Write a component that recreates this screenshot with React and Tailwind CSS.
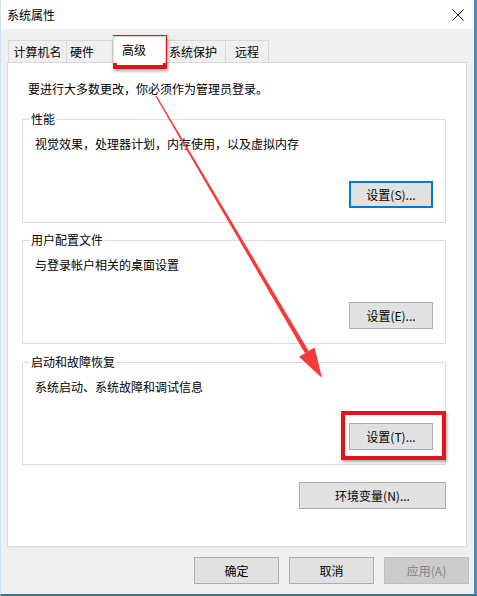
import React from "react";

const font = "font-['Noto_Sans_CJK_SC','Microsoft_YaHei',sans-serif]";

function Btn({ children, focused, disabled, w = "w-[84px]" }) {
  const base = `${w} h-[27px] flex items-center justify-center text-[12px] leading-none`;
  if (focused) return <div className={`${base} border-2 border-[#0078d7] bg-[#e1e1e1] text-black`}>{children}</div>;
  if (disabled) return <div className={`${base} border border-[#bfbfbf] bg-[#cccccc] text-[#838383]`}>{children}</div>;
  return <div className={`${base} border border-[#adadad] bg-[#e1e1e1] text-black`}>{children}</div>;
}

function Group({ label, text, button, focused, h = "h-[104px]", className = "" }) {
  return (
    <div className={`relative ${h} border border-[#dcdcdc] flex flex-col px-[12px] pt-[16px] pb-[14px] ${className}`}>
      <span className="absolute -top-[9px] left-[7px] bg-white px-[1px] text-[12px] leading-[16px]">{label}</span>
      <p className="text-[12px] leading-[16px]">{text}</p>
      <div className="mt-auto self-end">
        <Btn focused={focused}>{button}</Btn>
      </div>
    </div>
  );
}

export default function App() {
  return (
    <div className={`relative w-[477px] h-[596px] bg-[#f0f0f0] border-l border-l-[#cfe0f0] border-r-[3px] border-r-[#4a8ac4] border-b-2 border-b-[#2d7c8c] text-black ${font} overflow-hidden`}>
      {/* Title bar */}
      <div className="h-[29px] bg-white flex items-center justify-between pl-[6px] pr-[6px]">
        <span className="text-[12px]">系统属性</span>
        <svg width="12" height="12" viewBox="0 0 12 12" className="mr-[4px]">
          <path d="M0.5 0.5 L11.5 11.5 M11.5 0.5 L0.5 11.5" stroke="#111" strokeWidth="1" />
        </svg>
      </div>

      {/* Tabs */}
      <div className="mt-[6px] ml-[7px] h-[27px] flex items-end text-[12px]">
        <div className="w-[59px] h-[22px] border border-b-0 border-[#d9d9d9] flex items-center justify-center">计算机名</div>
        <div className="w-[46px] h-[22px] border border-b-0 border-l-0 border-[#d9d9d9] flex items-center pl-[3px]">硬件</div>
        <div className="relative z-10 -mb-px w-[53px] h-[27px] bg-white border border-b-0 border-[#d9d9d9] flex items-center pl-[8px]">高级</div>
        <div className="w-[60px] h-[22px] border border-b-0 border-l-0 border-[#d9d9d9] flex items-center pl-[3px]">系统保护</div>
        <div className="w-[43px] h-[22px] border border-b-0 border-l-0 border-[#d9d9d9] flex items-center justify-center">远程</div>
      </div>

      {/* Tab panel */}
      <div className="ml-[6px] w-[460px] h-[485px] bg-white border border-[#d9d9d9] flex flex-col pl-[14px] pr-[20px] pt-[18px]">
        <p className="ml-[6px] text-[12px] leading-[16px]">要进行大多数更改，你必须作为管理员登录。</p>
        <Group className="mt-[22px]" label="性能" text="视觉效果，处理器计划，内存使用，以及虚拟内存" button="设置(S)..." focused />
        <Group className="mt-[17px]" label="用户配置文件" text="与登录帐户相关的桌面设置" button="设置(E)..." />
        <Group className="mt-[18px]" h="h-[103px]" label="启动和故障恢复" text="系统启动、系统故障和调试信息" button="设置(T)..." />
        <div className="mt-[17px] self-end">
          <Btn w="w-[147px]">环境变量(N)...</Btn>
        </div>
      </div>

      {/* Dialog buttons */}
      <div className="mt-[10px] flex justify-end gap-[10px] pr-[5px]">
        <Btn w="w-[85px]">确定</Btn>
        <Btn w="w-[85px]">取消</Btn>
        <Btn w="w-[85px]" disabled>应用(A)</Btn>
      </div>

      {/* Annotations */}
      <div className="absolute left-[112px] top-[35px] w-[54px] h-[34px] border-4 border-[#e3141c] shadow-[1px_2px_3px_rgba(0,0,0,0.35)]" />
      <div className="absolute left-[340px] top-[411px] w-[105px] h-[49px] border-4 border-[#e3141c] shadow-[1px_2px_3px_rgba(0,0,0,0.35)]" />
      <svg className="absolute left-0 top-0 pointer-events-none" width="477" height="596" viewBox="0 0 477 596">
        <polygon points="155.6,95.7 307.7,351 303.9,353.2 154.4,96.3" fill="#f53a3a" />
        <polygon points="313.6,347.5 321,378 298,356.7" fill="#f53a3a" />
      </svg>
    </div>
  );
}
